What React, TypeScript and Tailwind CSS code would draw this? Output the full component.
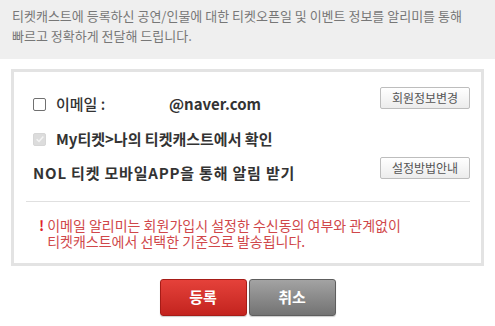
import React from 'react';

const FONT = "font-['Malgun_Gothic','Noto_Sans_CJK_KR',sans-serif]";

const SmallButton: React.FC<{ label: string }> = ({ label }) => (
  <button className="h-[22px] w-[90px] shrink-0 rounded-[2px] border border-[#bdbdbd] bg-gradient-to-b from-white to-[#ececec] text-[12px] leading-none text-[#555]">
    {label}
  </button>
);

export default function App() {
  return (
    <div className={`${FONT} h-[326px] w-[495px] bg-white`}>
      <div className="h-[59px] bg-[#efefef] px-[12px] pt-[6px] text-[13px] leading-[20px] text-[#777]">
        티켓캐스트에 등록하신 공연/인물에 대한 티켓오픈일 및 이벤트 정보를 알리미를 통해
        <br />
        빠르고 정확하게 전달해 드립니다.
      </div>

      <div className="mx-[11px] mt-[10px] h-[197px] border-[3px] border-[#e3e3e3] bg-white pl-[12px] pr-[11px] pt-[15px]">
        <div className="flex items-start justify-between pl-[7px]">
          <label className="mt-[7px] flex h-[20px] items-center text-[15px] leading-[20px] text-[#333]">
            <span className="mr-[10px] inline-block h-[13px] w-[13px] rounded-[2px] border border-[#707070] bg-white" />
            <span className="w-[113px] font-medium">이메일 :</span>
            <span className="font-bold">@naver.com</span>
          </label>
          <SmallButton label="회원정보변경" />
        </div>

        <div className="mt-[15px] flex h-[20px] items-center pl-[7px]">
          <span className="mr-[10px] flex h-[13px] w-[13px] items-center justify-center rounded-[2px] border border-[#d6d6d6] bg-[#dcdcdc]">
            <svg viewBox="0 0 12 12" className="h-[10px] w-[10px]">
              <path d="M2 6.2 L4.8 9 L10 3" fill="none" stroke="#f4f4f4" strokeWidth="1.8" />
            </svg>
          </span>
          <span className="text-[15px] font-semibold text-[#333]">My티켓&gt;나의 티켓캐스트에서 확인</span>
        </div>

        <div className="mt-[8px] flex items-start justify-between pl-[7px]">
          <span className="mt-[6px] text-[15px] font-bold leading-[20px] tracking-[0.8px] text-[#333]">
            NOL 티켓 모바일APP을 통해 알림 받기
          </span>
          <SmallButton label="설정방법안내" />
        </div>

        <div className="mt-[18px] border-t border-[#e0e0e0]" />

        <div className="mt-[15px] flex gap-[3px] pl-[13px] text-[14px] leading-[16px] text-[#d0474a]">
          <span className="font-bold text-[#e0212b]">!</span>
          <p>
            이메일 알리미는 회원가입시 설정한 수신동의 여부와 관계없이
            <br />
            티켓캐스트에서 선택한 기준으로 발송됩니다.
          </p>
        </div>
      </div>

      <div className="mt-[13px] flex justify-center gap-[2px]">
        <button className="h-[37px] w-[87px] rounded-[3px] border border-[#a61c17] bg-gradient-to-b from-[#e5413a] to-[#c3231e] text-[15px] font-bold text-white shadow-[0_1px_1px_rgba(0,0,0,0.2)]">
          등록
        </button>
        <button className="h-[37px] w-[87px] rounded-[3px] border border-[#5e5e5e] bg-gradient-to-b from-[#a3a3a3] to-[#737373] text-[15px] font-bold text-white shadow-[0_1px_1px_rgba(0,0,0,0.2)]">
          취소
        </button>
      </div>
    </div>
  );
}
